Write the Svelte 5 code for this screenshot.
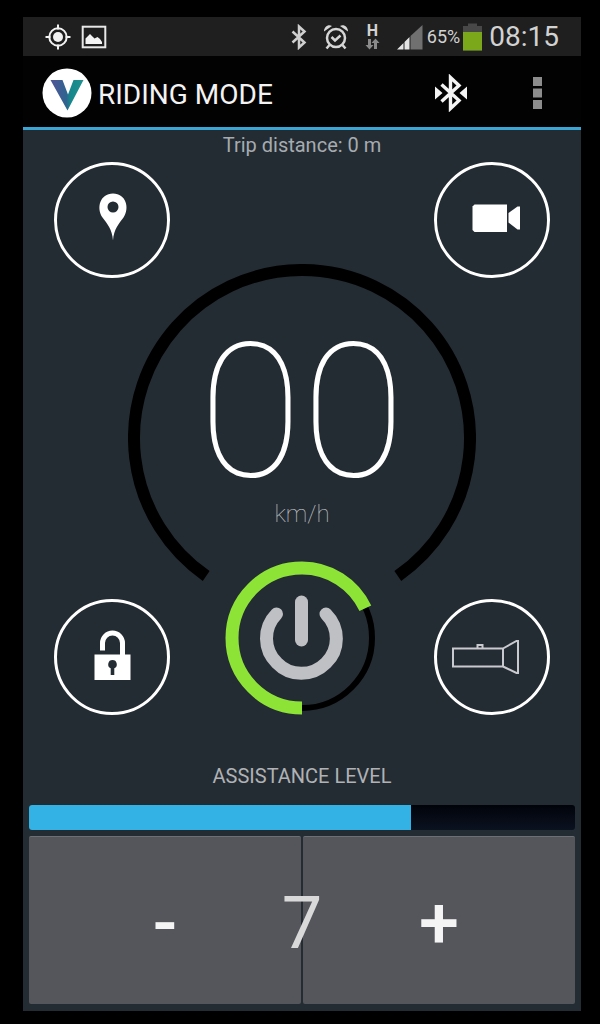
<script lang="ts">
  const MAX_LEVEL = 10;

  let speed = $state(0);
  let distance = $state(0);
  let level = $state(7);
  let battery = $state(65);
  let charge = $state(68);

  let speedText = $derived(String(speed).padStart(2, "0"));
  let percent = $derived((level / MAX_LEVEL) * 100);

  function changeLevel(step: number) {
    level = Math.min(MAX_LEVEL, Math.max(0, level + step));
  }
</script>

<div class="device">
  <div class="screen">
    <div class="status-bar">
      <svg class="gps" width="26" height="26" viewBox="0 0 26 26" fill="none" stroke="#f2f2f2" stroke-width="2">
        <circle cx="13" cy="13" r="8.7" />
        <circle cx="13" cy="13" r="5" fill="#f2f2f2" stroke="none" />
        <path d="M13 0.5v5M13 20.5v5M0.5 13h5M20.5 13h5" />
      </svg>
      <svg width="26" height="26" viewBox="0 0 26 26">
        <rect x="1.7" y="2.7" width="22.6" height="20.6" fill="none" stroke="#e8e8e8" stroke-width="2" />
        <path d="M4.5 20v-5.500l4.500-4.500 3 3 1.500 1.500 3-1.500 2.500 2 2 3v2z" fill="#f4f4f4" />
      </svg>
      <div class="status-right">
        <svg width="16" height="26" viewBox="0 0 16 26" fill="none" stroke="#cfcfcf" stroke-width="2.500">
          <path d="M1.500 7.500l12 11-5.500 5V2.500l5.500 5-12 11" />
        </svg>
        <svg class="alarm" width="26" height="26" viewBox="0 0 26 26" fill="none" stroke="#d6d6d6" stroke-width="2.500">
          <circle cx="13" cy="14" r="9" />
          <path d="M8.500 13l3.500 3.500 5.500-5M6.500 21l-3 3.500M19.500 21l3 3.500" />
          <path d="M1 7.500C1 3 5 0 9 2zM25 7.500C25 3 21 0 17 2z" fill="#d6d6d6" stroke="none" />
        </svg>
        <div class="network">
          <span>H</span>
          <svg width="15" height="12" viewBox="0 0 15 12" fill="#8a8a8a">
            <path d="M3 1h3v6h2.500l-4 4.500-4-4.500H3zM9 11V5H6.500l4-4.500 4 4.500H12v6z" />
          </svg>
        </div>
        <svg class="signal" width="26" height="26" viewBox="0 0 26 26">
          <path d="M0 25.500l6.500-6.500v6.500zM7.500 25.500V18l5-5v12.500z" fill="#e4e4e4" />
          <path d="M13.500 25.500V12L25.500 1v24.500z" fill="#707070" />
        </svg>
        <span class="percent">{battery}%</span>
        <svg class="battery" width="19" height="28" viewBox="0 0 19 28">
          <path d="M5 0.500h9V3h5v24.500H0V3h5z" fill="#484848" />
          <rect x="0" y="9" width="19" height="18.500" fill="#7ba81b" />
        </svg>
        <span class="clock">08:15</span>
      </div>
    </div>

    <header class="action-bar">
      <svg class="logo" width="50" height="50" viewBox="0 0 50 50">
        <defs>
          <linearGradient id="logo-fill" x1="0" x2="1">
            <stop offset="0.100" stop-color="#4c5796" />
            <stop offset="0.480" stop-color="#2f648f" />
            <stop offset="0.600" stop-color="#16888c" />
            <stop offset="1" stop-color="#22908f" />
          </linearGradient>
        </defs>
        <circle cx="25" cy="25" r="24.500" fill="#fff" />
        <path d="M8.500 12h12l5.500 14.500L31.500 12h10L25.500 42.500z" fill="url(#logo-fill)" />
      </svg>
      <h1>RIDING MODE</h1>
      <button class="bar-btn" aria-label="Bluetooth">
        <svg width="34" height="38" viewBox="0 0 34 38">
          <path d="M7.500 10.500l17.500 16-8.500 8V3.500l8.500 8-17.500 16" fill="none" stroke="#f4f4f4" stroke-width="3.400" />
          <path d="M1 12.500l7.500 6.500L1 25.500zM33 12.500L25.500 19l7.500 6.500z" fill="#f4f4f4" />
        </svg>
      </button>
      <button class="bar-btn menu" aria-label="More options">
        <svg width="9" height="32" viewBox="0 0 9 32" fill="#8c8c8c">
          <rect width="9" height="9" />
          <rect y="11.500" width="9" height="9" />
          <rect y="23" width="9" height="9" />
        </svg>
      </button>
    </header>

    <main>
      <p class="trip">Trip distance: {distance} m</p>

      <div class="dashboard">
        <div class="gauge">
          <div class="speed">
            <svg class="dial" width="348" height="318" viewBox="0 0 348 318" fill="none">
              <path d="M78.200 312A168 168 0 1 1 269.800 312" stroke="#000" stroke-width="12" />
            </svg>
            <div class="readout">
              <span class="value">{speedText}</span>
              <span class="unit">km/h</span>
            </div>
          </div>
          <button class="power" aria-label="Power">
            <svg width="154" height="154" viewBox="0 0 154 154" fill="none">
              <circle cx="77" cy="77" r="70" stroke="#000" stroke-width="6" />
              <circle
                cx="77"
                cy="77"
                r="70"
                stroke="#8de437"
                stroke-width="13"
                pathLength="100"
                stroke-dasharray="{charge} 100"
                transform="rotate(90 77 77)"
              />
              <g stroke="#bfc0c3" stroke-width="13" stroke-linecap="round">
                <path d="M51.500 53A35 35 0 1 0 101 53" />
                <path d="M76.500 41v38" />
              </g>
            </svg>
          </button>
        </div>

        <button class="round top left" aria-label="Map">
          <svg width="116" height="116" viewBox="0 0 116 116">
            <path
              d="M59 78.500C58.200 67 53 61.500 48.500 55.500C42 46 46 31.500 59 31.500S76 46 69.500 55.500C65 61.500 59.800 67 59 78.500zM59 39.500a5.500 5.500 0 1 0 0 11a5.500 5.500 0 1 0 0-11z"
              fill="#fff"
              fill-rule="evenodd"
            />
          </svg>
        </button>
        <button class="round top right" aria-label="Camera">
          <svg width="116" height="116" viewBox="0 0 116 116" fill="#fff">
            <path d="M40.500 42.500H73v27.500H40.500l-2-2V44.500z" />
            <path d="M74.500 51l9-6.500H86v23h-2.500l-9-7z" />
          </svg>
        </button>
        <button class="round bottom left" aria-label="Lock">
          <svg width="116" height="116" viewBox="0 0 116 116">
            <path d="M48.500 51.500V44a10 10 0 0 1 20 0v13" fill="none" stroke="#fff" stroke-width="5" />
            <path
              d="M40.500 55.500h36v25.500h-36zM58.500 61a4.300 4.300 0 0 0-1.800 8.200V76h3.600v-6.800A4.300 4.300 0 0 0 58.500 61z"
              fill="#fff"
              fill-rule="evenodd"
            />
          </svg>
        </button>
        <button class="round bottom right" aria-label="Flashlight">
          <svg width="116" height="116" viewBox="0 0 116 116" fill="none" stroke="#c9cacf" stroke-width="2">
            <path d="M19 49.500h50v18H19zM69 49.500l13.500-7.500h1.500v32h-1.500L69 67.500" />
            <path d="M43.500 49.500V46h5v3.500" />
          </svg>
        </button>
      </div>

      <h2 id="assist-label">ASSISTANCE LEVEL</h2>
      <div
        class="progress"
        role="progressbar"
        aria-labelledby="assist-label"
        aria-valuemin="0"
        aria-valuemax={MAX_LEVEL}
        aria-valuenow={level}
      >
        <div class="fill" style="width: {percent}%"></div>
      </div>
      <div class="stepper">
        <button onclick={() => changeLevel(-1)}>-</button>
        <button onclick={() => changeLevel(1)}>+</button>
        <span class="level">{level}</span>
      </div>
    </main>
  </div>
</div>

<style>
  :global(body) {
    margin: 0;
    background: #000;
  }

  .device {
    box-sizing: border-box;
    padding: 17px 19px 14px 23px;
    background: #000;
    font-family: Roboto, "Liberation Sans", sans-serif;
  }

  .screen {
    background: #242c33;
  }

  button {
    padding: 0;
    border: none;
    background: none;
    color: inherit;
    font-family: inherit;
    cursor: pointer;
  }

  svg {
    display: block;
    flex: none;
  }

  .status-bar {
    display: flex;
    align-items: center;
    gap: 10px;
    height: 39px;
    padding: 0 22px;
    background: #1f1f1f;
    color: #d2d2d2;
  }

  .status-right {
    display: flex;
    align-items: center;
    margin-left: auto;
  }

  .alarm {
    margin-left: 16px;
  }

  .network {
    display: flex;
    flex-direction: column;
    align-items: center;
    margin: 0 17px 0 16px;
    font-size: 16px;
    font-weight: 700;
    line-height: 14px;
  }

  .signal {
    margin-right: 4px;
  }

  .percent {
    margin-right: 3px;
    font-size: 18px;
  }

  .clock {
    margin-left: 7px;
    font-size: 28px;
  }

  .action-bar {
    box-sizing: border-box;
    display: flex;
    align-items: center;
    height: 74px;
    padding: 3px 20px 0 19px;
    background: #020202;
    border-bottom: 3px solid #3ba6d3;
    color: #f3f3f3;
  }

  h1 {
    flex: 1;
    margin: 0 0 0 6px;
    padding-top: 2px;
    font-size: 28px;
    font-weight: 400;
  }

  .bar-btn {
    display: flex;
    align-items: center;
    justify-content: center;
    width: 48px;
    height: 48px;
  }

  .menu {
    margin-left: 38px;
  }

  main {
    padding: 0 6px 7px;
  }

  .trip {
    margin: 0;
    padding-bottom: 2px;
    font-size: 20px;
    line-height: 30px;
    text-align: center;
    color: #a6abb0;
  }

  .dashboard {
    display: grid;
    grid-template-columns: 1fr 1fr;
    padding: 0 25px;
  }

  .gauge {
    grid-area: 1 / 1 / 3 / 3;
    display: flex;
    flex-direction: column;
    align-items: center;
    padding-top: 102px;
  }

  .speed {
    display: grid;
    justify-items: center;
  }

  .dial,
  .readout {
    grid-area: 1 / 1;
  }

  .readout {
    display: flex;
    flex-direction: column;
    align-items: center;
    padding-top: 74px;
  }

  .value {
    font-size: 188px;
    font-weight: 100;
    line-height: 148px;
    color: #fff;
  }

  .unit {
    margin-top: 14px;
    font-size: 24px;
    font-weight: 100;
    line-height: 28px;
    color: #c4c7ca;
  }

  .power {
    margin-top: -21px;
    border-radius: 50%;
  }

  .round {
    box-sizing: border-box;
    display: flex;
    align-items: center;
    justify-content: center;
    width: 116px;
    height: 116px;
    border: 3px solid #fff;
    border-radius: 50%;
  }

  .top {
    grid-row: 1;
    align-self: start;
  }

  .bottom {
    grid-row: 2;
    align-self: end;
  }

  .left {
    grid-column: 1;
    justify-self: start;
  }

  .right {
    grid-column: 2;
    justify-self: end;
  }

  h2 {
    margin: 49px 0 17px;
    font-size: 20px;
    font-weight: 400;
    line-height: 24px;
    text-align: center;
    color: #b0b2b5;
  }

  .progress {
    height: 25px;
    overflow: hidden;
    border-radius: 3px;
    background: linear-gradient(#01030a, #0b1220);
  }

  .fill {
    height: 100%;
    background: #33b3e5;
  }

  .stepper {
    display: grid;
    grid-template-columns: 1fr 1fr;
    gap: 2px;
    margin-top: 6px;
  }

  .stepper button {
    height: 168px;
    padding-top: 6px;
    border-top: 1px solid #6c6f73;
    border-radius: 2px;
    background: #54565b;
    color: #f4f4f4;
    font-size: 72px;
    font-weight: 500;
  }

  .stepper button:first-child {
    grid-area: 1 / 1;
  }

  .stepper button:nth-child(2) {
    grid-area: 1 / 2;
  }

  .level {
    grid-area: 1 / 1 / 2 / 3;
    place-self: center;
    padding-top: 6px;
    color: #d9d9d9;
    font-size: 72px;
    pointer-events: none;
  }
</style>
